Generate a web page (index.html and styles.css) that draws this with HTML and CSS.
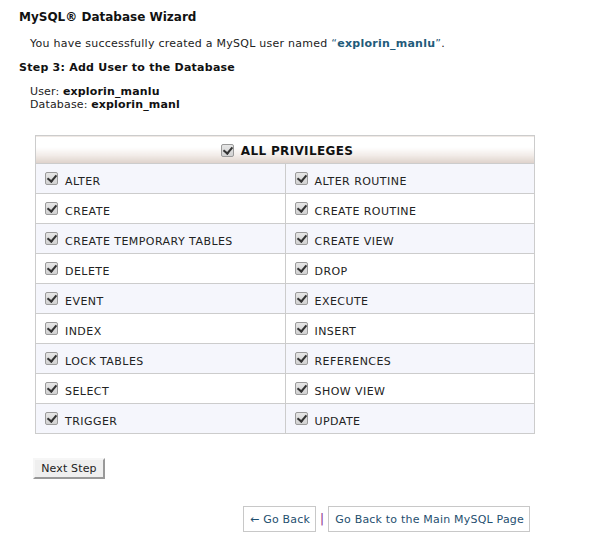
FILE: index.html
```html
<!DOCTYPE html>
<html>
<head>
<meta charset="utf-8">
<link rel="stylesheet" href="styles.css">
</head>
<body>
<div class="page">
  <h1 class="title">MySQL® Database Wizard</h1>
  <p class="msg">You have successfully created a MySQL user named <span class="q">“</span><b class="name">explorin_manlu</b><span class="q">”</span>.</p>
  <h2 class="step">Step 3: Add User to the Database</h2>
  <div class="info">
    <div>User: <b>explorin_manlu</b></div>
    <div>Database: <b>explorin_manl</b></div>
  </div>
  <table class="privs">
    <thead>
      <tr><th colspan="2"><label class="all"><input type="checkbox" checked> ALL PRIVILEGES</label></th></tr>
    </thead>
    <tbody>
      <tr class="odd"><td><label><input type="checkbox" checked> ALTER</label></td><td><label><input type="checkbox" checked> ALTER ROUTINE</label></td></tr>
      <tr><td><label><input type="checkbox" checked> CREATE</label></td><td><label><input type="checkbox" checked> CREATE ROUTINE</label></td></tr>
      <tr class="odd"><td><label><input type="checkbox" checked> CREATE TEMPORARY TABLES</label></td><td><label><input type="checkbox" checked> CREATE VIEW</label></td></tr>
      <tr><td><label><input type="checkbox" checked> DELETE</label></td><td><label><input type="checkbox" checked> DROP</label></td></tr>
      <tr class="odd"><td><label><input type="checkbox" checked> EVENT</label></td><td><label><input type="checkbox" checked> EXECUTE</label></td></tr>
      <tr><td><label><input type="checkbox" checked> INDEX</label></td><td><label><input type="checkbox" checked> INSERT</label></td></tr>
      <tr class="odd"><td><label><input type="checkbox" checked> LOCK TABLES</label></td><td><label><input type="checkbox" checked> REFERENCES</label></td></tr>
      <tr><td><label><input type="checkbox" checked> SELECT</label></td><td><label><input type="checkbox" checked> SHOW VIEW</label></td></tr>
      <tr class="odd"><td><label><input type="checkbox" checked> TRIGGER</label></td><td><label><input type="checkbox" checked> UPDATE</label></td></tr>
    </tbody>
  </table>
  <div class="actions"><button class="btn" type="button">Next Step</button></div>
  <div class="nav">
    <a class="navlink" href="#">← Go Back</a>
    <span class="sep">|</span>
    <a class="navlink" href="#">Go Back to the Main MySQL Page</a>
  </div>
</div>
</body>
</html>
```
FILE: styles.css
```css
html, body {
  margin: 0;
  padding: 0;
  background: #fff;
}
body {
  font-family: "DejaVu Sans", Verdana, sans-serif;
  font-size: 11px;
  color: #222;
  letter-spacing: 0.15px;
}
.page {
  padding: 10px 19px 0 19px;
  width: 516px;
}
.title {
  font-size: 12px;
  font-weight: bold;
  margin: 0;
  line-height: 15px;
  color: #111;
  letter-spacing: 0;
}
.msg {
  margin: 12px 0 0 11px;
  line-height: 14px;
  color: #222;
  letter-spacing: 0.25px;
}
.msg .name,
.msg .q {
  color: #1f5b7a;
}
.step {
  font-size: 11px;
  font-weight: bold;
  margin: 10px 0 0 0;
  line-height: 14px;
  color: #111;
  letter-spacing: 0.25px;
}
.info {
  margin: 10px 0 0 11px;
  line-height: 13px;
}
.info b {
  color: #111;
}
.privs {
  margin: 24px 0 0 16px;
  width: 500px;
  border-collapse: collapse;
  border: 1px solid #ccc;
  table-layout: fixed;
}
.privs th {
  height: 28px;
  padding: 8px 0 0 0;
  box-sizing: border-box;
  vertical-align: top;
  line-height: 15px;
  text-align: center;
  font-size: 12px;
  font-weight: bold;
  color: #111;
  letter-spacing: 0.35px;
  border-bottom: 1px solid #ccc;
  background: linear-gradient(to bottom, #ffffff 0%, #ffffff 40%, #f2ece8 70%, #ddd1ca 100%);
}
.privs td {
  height: 23px;
  padding: 6px 0 0 9px;
  border: 1px solid #ccc;
  color: #222;
  vertical-align: middle;
  letter-spacing: 0.45px;
}
.privs tr.odd td {
  background: #f5f6fc;
}
.privs label {
  display: flex;
  align-items: center;
  gap: 7px;
}
.privs label.all {
  display: inline-flex;
  gap: 7px;
  position: relative;
  left: 2px;
}
.privs input {
  -webkit-appearance: none;
  appearance: none;
  margin: 0;
  width: 13px;
  height: 13px;
  box-sizing: border-box;
  border: 1px solid #9a9a9a;
  border-radius: 2px;
  background: linear-gradient(to bottom, #e6e6e6, #d2d2d2);
  position: relative;
  top: -3px;
  flex: none;
}
.privs input::after {
  content: "";
  position: absolute;
  left: 3px;
  top: 0px;
  width: 4px;
  height: 7px;
  border: solid #333;
  border-width: 0 2px 2px 0;
  transform: rotate(40deg);
}
.privs label.all input {
  top: -1px;
}
.actions {
  margin: 24px 0 0 14px;
}
.btn {
  font-family: "DejaVu Sans", Verdana, sans-serif;
  font-size: 11px;
  letter-spacing: 0.15px;
  color: #222;
  background: #efefef;
  border: 2px solid;
  border-color: #f6f6f6 #999 #999 #f6f6f6;
  padding: 2px 5px;
  height: 21px;
  width: 72px;
  border-radius: 0;
}
.nav {
  display: flex;
  justify-content: flex-end;
  align-items: center;
  gap: 4px;
  margin: 27px 0 0 0;
  padding-right: 5px;
}
.navlink {
  display: inline-block;
  border: 1px solid #c8c8c8;
  padding: 6px 5px 5px 6px;
  line-height: 13px;
  color: #1f4f6f;
  text-decoration: none;
  letter-spacing: 0.2px;
}
.sep {
  color: #8a1a8a;
  font-size: 12px;
}
```
